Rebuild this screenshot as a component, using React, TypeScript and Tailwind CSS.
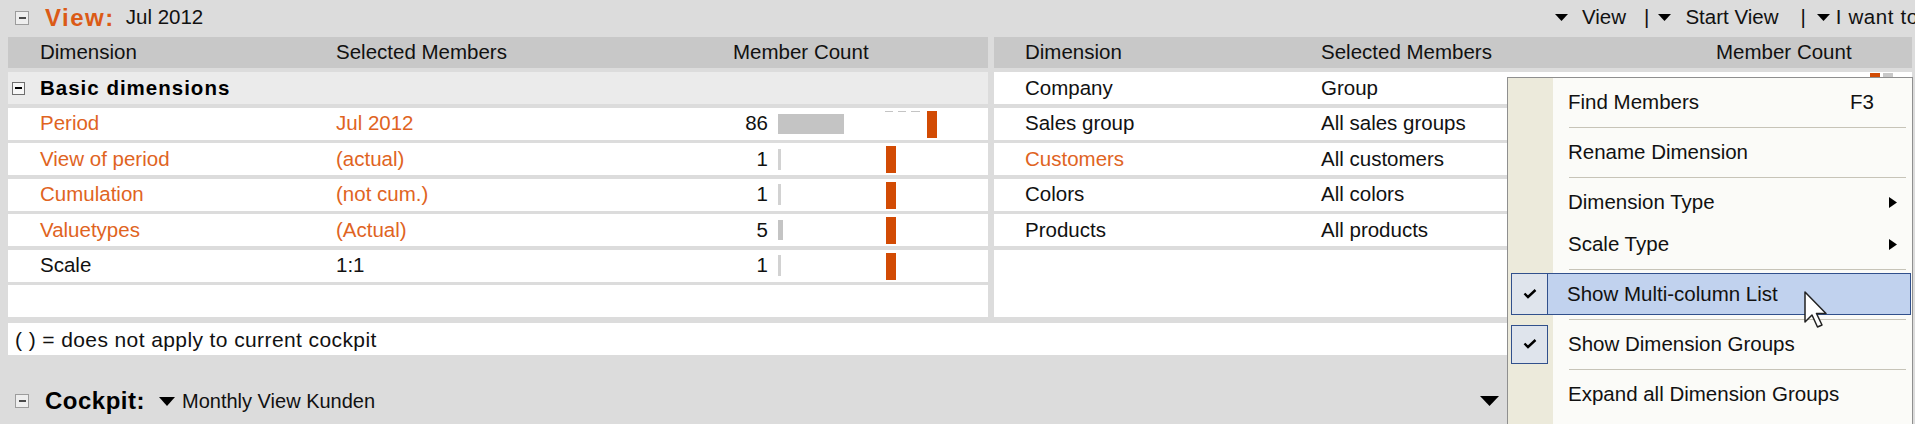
import React from "react";

type LeftRow = {
  dim: string;
  sel: string;
  count: number;
  bar: number;
  mark: number;
  hot: boolean;
  dashes?: boolean;
};

const leftRows: LeftRow[] = [
  { dim: "Period", sel: "Jul 2012", count: 86, bar: 66, mark: 149, hot: true, dashes: true },
  { dim: "View of period", sel: "(actual)", count: 1, bar: 3, mark: 108, hot: true },
  { dim: "Cumulation", sel: "(not cum.)", count: 1, bar: 3, mark: 108, hot: true },
  { dim: "Valuetypes", sel: "(Actual)", count: 5, bar: 5, mark: 108, hot: true },
  { dim: "Scale", sel: "1:1", count: 1, bar: 3, mark: 108, hot: false },
];

const rightRows = [
  { dim: "Company", sel: "Group", hot: false },
  { dim: "Sales group", sel: "All sales groups", hot: false },
  { dim: "Customers", sel: "All customers", hot: true },
  { dim: "Colors", sel: "All colors", hot: false },
  { dim: "Products", sel: "All products", hot: false },
];

type MenuItem =
  | { sep: true }
  | { sep?: false; label: string; right?: "F3" | "arrow"; checked?: boolean; active?: boolean };

const menu: MenuItem[] = [
  { label: "Find Members", right: "F3" },
  { sep: true },
  { label: "Rename Dimension" },
  { sep: true },
  { label: "Dimension Type", right: "arrow" },
  { label: "Scale Type", right: "arrow" },
  { sep: true },
  { label: "Show Multi-column List", checked: true, active: true },
  { sep: true },
  { label: "Show Dimension Groups", checked: true },
  { sep: true },
  { label: "Expand all Dimension Groups" },
];

function Minus({ dark }: { dark?: boolean }) {
  return (
    <span
      className={
        dark
          ? "flex h-[13px] w-[13px] shrink-0 items-center justify-center border border-[#6e6e6e] bg-[#f6f6f6]"
          : "flex h-[14px] w-[14px] shrink-0 items-center justify-center border border-[#9c9c9c] bg-[#eeeeee]"
      }
    >
      <span className={dark ? "h-[2px] w-[7px] bg-black" : "h-[2px] w-[7px] bg-[#4a4a4a]"} />
    </span>
  );
}

function Tri({ className }: { className: string }) {
  return (
    <svg viewBox="0 0 12 7" className={className} preserveAspectRatio="none">
      <polygon points="0,0 12,0 6,7" fill="black" />
    </svg>
  );
}

function Check() {
  return (
    <svg viewBox="0 0 14 10" className="h-[10px] w-[14px]">
      <path d="M1.5 4.5 L5 8 L12.5 1" fill="none" stroke="black" strokeWidth="2.4" />
    </svg>
  );
}

function MenuRow({ item }: { item: MenuItem }) {
  if (item.sep) {
    return (
      <div className="flex h-[8px] items-center pl-[61px] pr-[6px]">
        <div className="h-px flex-1 bg-[#c7c4b8]" />
      </div>
    );
  }
  if (item.active) {
    return (
      <div className="ml-[3px] mr-[1px] flex h-[42px] items-center border border-[#31508c] bg-[#c1d2ee]">
        <div className="flex h-full w-[36px] items-center justify-center border-r border-[#31508c] bg-[#dfe4ec]">
          <Check />
        </div>
        <span className="pl-[19px]">{item.label}</span>
      </div>
    );
  }
  return (
    <div className="flex h-[42px] items-center">
      <div className="flex h-full w-[45px] items-center">
        {item.checked && (
          <div className="ml-[3px] flex h-[39px] w-[37px] items-center justify-center border border-[#31508c] bg-[#dfe4ec]">
            <Check />
          </div>
        )}
      </div>
      <span className="flex-1 pl-[15px]">{item.label}</span>
      {item.right === "F3" && <span className="mr-[38px]">F3</span>}
      {item.right === "arrow" && (
        <svg className="mr-[15px] h-[11px] w-[8px]" viewBox="0 0 8 11">
          <polygon points="0,0 8,5.5 0,11" fill="black" />
        </svg>
      )}
    </div>
  );
}

export default function App() {
  return (
    <div className="relative h-[424px] w-[1915px] overflow-hidden bg-[#dcdcdc] font-['Liberation_Sans',Arial,sans-serif] text-[20.5px] leading-none text-[#111]">
      {/* view title bar */}
      <div className="flex h-[37px] items-center pb-[2px]">
        <div className="flex w-[1555px] shrink-0 items-center">
          <span className="ml-[15px]">
            <Minus />
          </span>
          <span className="ml-[16px] text-[24px] font-bold tracking-[1.5px] text-[#db5a16]">View:</span>
          <span className="ml-[11px]">Jul 2012</span>
        </div>
        <div className="flex items-center whitespace-nowrap">
          <Tri className="h-[7px] w-[13px]" />
          <span className="ml-[14px]">View</span>
          <span className="ml-[18px]">|</span>
          <Tri className="ml-[9px] h-[7px] w-[13px]" />
          <span className="ml-[14px]">Start View</span>
          <span className="ml-[22px]">|</span>
          <Tri className="ml-[11px] h-[7px] w-[13px]" />
          <span className="ml-[6px] tracking-[0.6px]">I want to</span>
        </div>
      </div>

      {/* dimension tables */}
      <div className="flex gap-[6px] pl-[8px] pr-[3px]">
        <div className="flex w-[980px] flex-col">
          <div className="flex h-[31px] items-center bg-[#c8c8c8]">
            <div className="w-[296px] pl-[32px]">Dimension</div>
            <div className="w-[380px] pl-[32px]">Selected Members</div>
            <div className="pl-[49px]">Member Count</div>
          </div>
          <div className="mt-[4px] flex flex-col gap-[3.5px]">
            <div className="flex h-[32px] items-center bg-[#ebebeb] pl-[4px]">
              <Minus dark />
              <span className="ml-[15px] font-bold tracking-[1px] text-black">Basic dimensions</span>
            </div>
            {leftRows.map((r) => (
              <div key={r.dim} className="flex h-[32px] items-center bg-white">
                <div className={r.hot ? "w-[296px] pl-[32px] text-[#e0641f]" : "w-[296px] pl-[32px]"}>{r.dim}</div>
                <div className={r.hot ? "w-[380px] pl-[32px] text-[#e0641f]" : "w-[380px] pl-[32px]"}>{r.sel}</div>
                <div className="w-[84px] text-right">{r.count}</div>
                <div className="relative ml-[10px] flex h-full flex-1 items-center">
                  <div
                    className={r.count > 1 ? "h-[20px] bg-[#c4c4c4]" : "h-[21px] bg-[#d2d2d2]"}
                    style={{ width: r.bar }}
                  />
                  {r.dashes && (
                    <div className="absolute left-[107px] top-[3px] flex gap-[5px]">
                      <span className="h-px w-[8px] bg-[#c4c4c4]" />
                      <span className="h-px w-[8px] bg-[#c4c4c4]" />
                      <span className="h-px w-[9px] bg-[#c4c4c4]" />
                    </div>
                  )}
                  <div className="absolute top-[3px] h-[27px] w-[10px] bg-[#d24b04]" style={{ left: r.mark }} />
                </div>
              </div>
            ))}
            <div className="h-[32px] bg-white" />
          </div>
        </div>

        <div className="flex w-[918px] flex-col">
          <div className="flex h-[31px] items-center bg-[#c8c8c8]">
            <div className="w-[296px] pl-[31px]">Dimension</div>
            <div className="w-[380px] pl-[31px]">Selected Members</div>
            <div className="pl-[46px]">Member Count</div>
          </div>
          <div className="mt-[4px] flex flex-1 flex-col gap-[3.5px]">
            {rightRows.map((r, i) => (
              <div key={r.dim} className="flex h-[32px] items-center bg-white">
                <div className={r.hot ? "w-[296px] pl-[31px] text-[#e0641f]" : "w-[296px] pl-[31px]"}>{r.dim}</div>
                <div className="w-[380px] pl-[31px]">{r.sel}</div>
                <div className="flex h-full flex-1 items-start pt-[1px]">
                  {i === 0 && (
                    <>
                      <span className="ml-[200px] h-[27px] w-[10px] bg-[#d24b04]" />
                      <span className="ml-[3px] h-[27px] w-[10px] bg-[#c8c8c8]" />
                    </>
                  )}
                </div>
              </div>
            ))}
            <div className="flex-1 bg-white" />
          </div>
        </div>
      </div>

      {/* footnote */}
      <div className="ml-[8px] mr-[3px] mt-[6px] flex h-[32px] items-center bg-white pl-[7px] text-[21px] tracking-[0.4px]">
        ( ) = does not apply to current cockpit
      </div>

      {/* cockpit bar */}
      <div className="mt-[27px] flex h-[38px] items-center">
        <span className="ml-[15px]">
          <Minus />
        </span>
        <span className="ml-[16px] text-[24px] font-bold tracking-[0.5px] text-black">Cockpit:</span>
        <Tri className="ml-[14px] h-[9px] w-[16px]" />
        <span className="ml-[7px] text-[20px]">Monthly View Kunden</span>
        <div className="flex-1" />
        <Tri className="mr-[416px] h-[10px] w-[19px]" />
      </div>

      {/* context menu */}
      <div className="absolute left-[1507px] top-[77px] flex h-[360px] w-[406px] flex-col border border-[#8f8f8f] bg-[linear-gradient(to_right,#eceadb_45px,#fbfbf8_45px)] pt-[3px]">
        {menu.map((item, i) => (
          <MenuRow key={i} item={item} />
        ))}
      </div>

      {/* mouse pointer */}
      <svg className="absolute left-[1804px] top-[291px] h-[38px] w-[24px]" viewBox="0 0 24 38">
        <path
          d="M1 1 L1 31 L8 24 L13.5 36 L18 34 L12.5 22.5 L22 22.5 Z"
          fill="white"
          stroke="#222"
          strokeWidth="1.5"
          strokeLinejoin="round"
        />
      </svg>
    </div>
  );
}
